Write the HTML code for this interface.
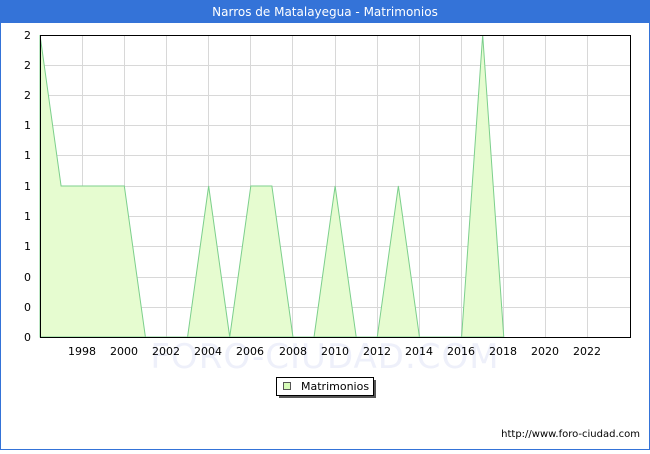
<!DOCTYPE html>
<html><head><style>
body{margin:0;width:650px;height:450px;overflow:hidden;background:#fff;font-family:"DejaVu Sans","Liberation Sans",sans-serif;}
</style></head><body>
<svg width="650" height="450" xmlns="http://www.w3.org/2000/svg" font-family="DejaVu Sans, Liberation Sans, sans-serif">
<rect x="0.5" y="0.5" width="649" height="449" fill="#fff" stroke="#3473d8"/>
<rect x="0" y="0" width="650" height="23" fill="#3473d8"/>
<text x="325" y="16" text-anchor="middle" fill="#fff" font-size="12">Narros de Matalayegua - Matrimonios</text>
<g stroke="#d8d8d8" stroke-width="1">
<line x1="40" y1="65.5" x2="630" y2="65.5"/><line x1="40" y1="95.5" x2="630" y2="95.5"/><line x1="40" y1="125.5" x2="630" y2="125.5"/><line x1="40" y1="155.5" x2="630" y2="155.5"/><line x1="40" y1="186.5" x2="630" y2="186.5"/><line x1="40" y1="216.5" x2="630" y2="216.5"/><line x1="40" y1="246.5" x2="630" y2="246.5"/><line x1="40" y1="277.5" x2="630" y2="277.5"/><line x1="40" y1="307.5" x2="630" y2="307.5"/>
<line x1="82.5" y1="35" x2="82.5" y2="337"/><line x1="124.5" y1="35" x2="124.5" y2="337"/><line x1="166.5" y1="35" x2="166.5" y2="337"/><line x1="208.5" y1="35" x2="208.5" y2="337"/><line x1="250.5" y1="35" x2="250.5" y2="337"/><line x1="292.5" y1="35" x2="292.5" y2="337"/><line x1="335.5" y1="35" x2="335.5" y2="337"/><line x1="377.5" y1="35" x2="377.5" y2="337"/><line x1="419.5" y1="35" x2="419.5" y2="337"/><line x1="461.5" y1="35" x2="461.5" y2="337"/><line x1="503.5" y1="35" x2="503.5" y2="337"/><line x1="545.5" y1="35" x2="545.5" y2="337"/><line x1="587.5" y1="35" x2="587.5" y2="337"/>
</g>
<text x="325" y="368" text-anchor="middle" font-size="34" fill="#eef0fa" letter-spacing="1">FORO-CIUDAD.COM</text>
<polygon fill="#e6fcd0" stroke="#7ccf8c" stroke-width="1" points="40,337 40,35 61.08,186 82.16,186 103.24,186 124.32,186 145.4,337 166.48,337 187.56,337 208.64,186 229.72,337 250.8,186 271.88,186 292.96,337 314.04,337 335.12,186 356.2,337 377.28,337 398.36,186 419.44,337 440.52,337 461.6,337 482.68,35 503.76,337"/>
<rect x="40.5" y="35.5" width="590" height="302" fill="none" stroke="#000"/>
<g font-size="11" fill="#000" text-anchor="end">
<text x="31" y="39">2</text><text x="31" y="69">2</text><text x="31" y="99">2</text><text x="31" y="129">1</text><text x="31" y="159">1</text><text x="31" y="190">1</text><text x="31" y="220">1</text><text x="31" y="250">1</text><text x="31" y="281">0</text><text x="31" y="311">0</text><text x="31" y="341">0</text>
</g>
<g font-size="11" fill="#000" text-anchor="middle">
<text x="82" y="355">1998</text><text x="124" y="355">2000</text><text x="166" y="355">2002</text><text x="208" y="355">2004</text><text x="250" y="355">2006</text><text x="293" y="355">2008</text><text x="335" y="355">2010</text><text x="377" y="355">2012</text><text x="419" y="355">2014</text><text x="461" y="355">2016</text><text x="503" y="355">2018</text><text x="545" y="355">2020</text><text x="587" y="355">2022</text>
</g>
<rect x="279" y="380" width="97" height="18" fill="#555"/>
<rect x="276.5" y="377.5" width="97" height="18" fill="#fff" stroke="#000"/>
<rect x="283.5" y="382.5" width="7" height="7" fill="#d6fbb8" stroke="#555"/>
<text x="301" y="390" font-size="11">Matrimonios</text>
<text x="640" y="437" text-anchor="end" font-size="10">http://www.foro-ciudad.com</text>
</svg>
</body></html>
